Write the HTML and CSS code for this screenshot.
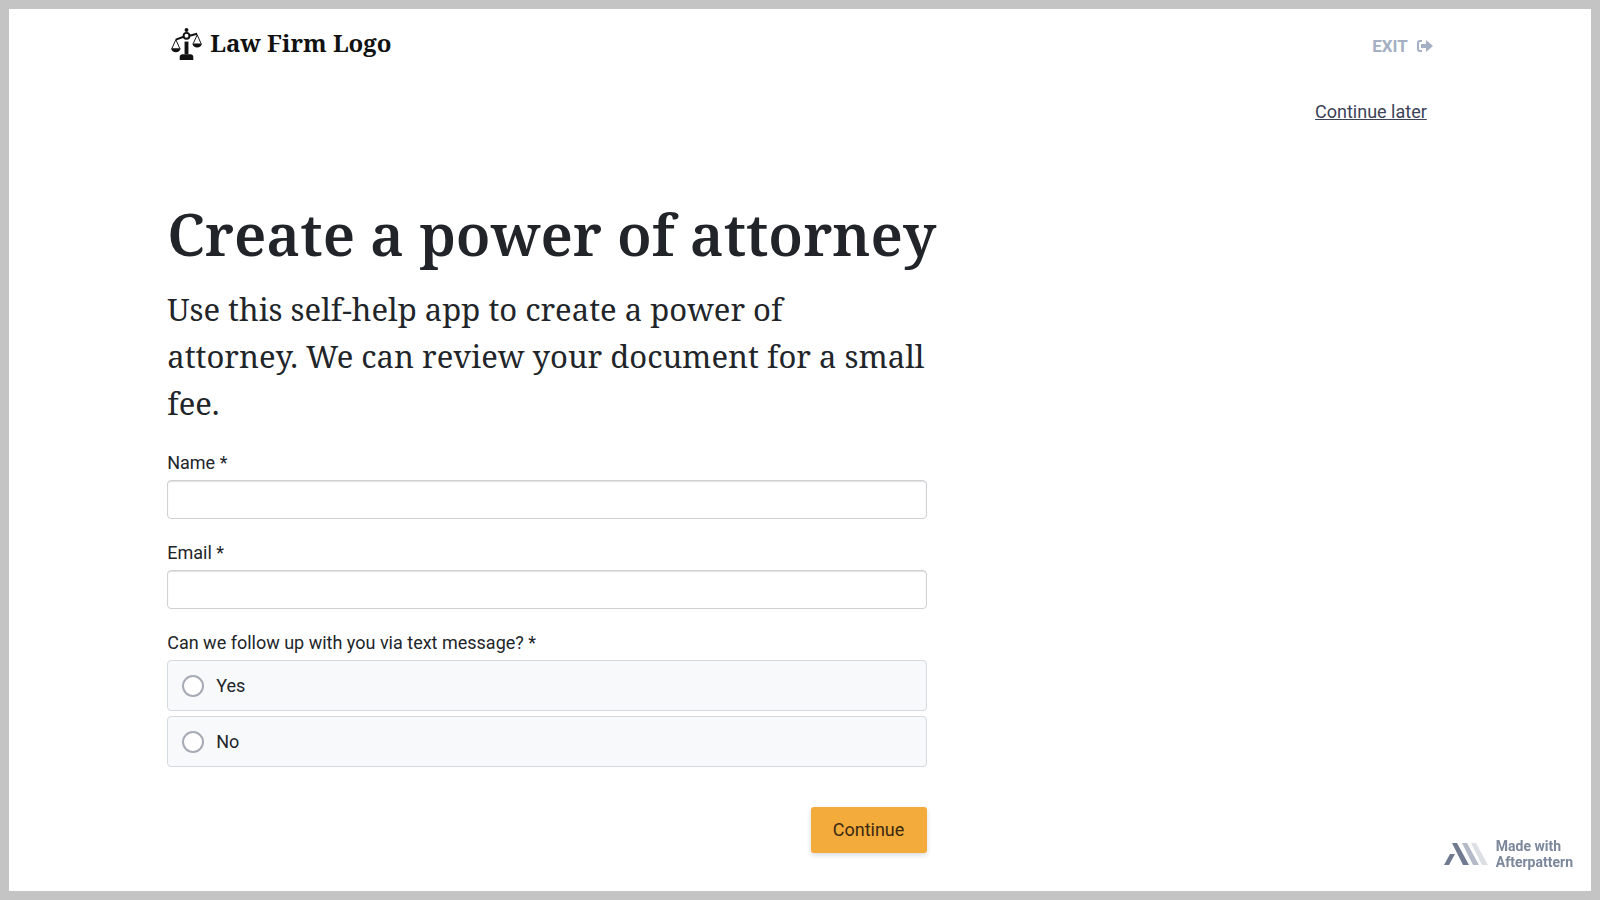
FILE: index.html
```
<!DOCTYPE html>
<html lang="en">

<head>
    <meta charset="UTF-8">
    <meta name="viewport" content="width=device-width, initial-scale=1.0">
    <title>Create a power of attorney</title>
    <link rel="stylesheet" href="styles.css">
</head>

<body>
    <div class="page">
        <div class="container">
            <header class="header">
                <div class="logo">
                    <svg class="logo-icon" viewBox="0 0 32 34" aria-hidden="true">
                        <circle cx="16" cy="3" r="2" />
                        <circle cx="16" cy="9" r="3" fill="none" stroke="#111" stroke-width="2" />
                        <path d="M5 13 L13 10 M19 9 L27 7" stroke="#111" stroke-width="2" />
                        <path d="M5 13 L1 22 M5 13 L9 22 M27 8 L23 17 M27 8 L31 17" stroke="#111" stroke-width="1" />
                        <path d="M0 22 H10 Q9 26 5 26 Q1 26 0 22 Z M22 17 H32 Q31 21 27 21 Q23 21 22 17 Z" />
                        <path d="M14 15 H18 V28 H14 Z" />
                        <path d="M9 34 V31 Q9 28 12 28 H20 Q23 28 23 31 V34 Z" />
                    </svg>
                    <span>Law Firm Logo</span>
                </div>
                <a class="exit" href="#">EXIT
                    <svg class="exit-icon" viewBox="0 0 17 14" aria-hidden="true">
                        <path d="M6 2 H4 Q2 2 2 4 V10 Q2 12 4 12 H6" fill="none" stroke="currentColor" stroke-width="2" />
                        <path d="M5 5 H10 V1 L17 7 L10 13 V9 H5 Z" fill="currentColor" />
                    </svg>
                </a>
            </header>

            <div class="later">
                <a href="#">Continue later</a>
            </div>

            <main>
                <form class="form">
                    <h1>Create a power of attorney</h1>
                    <p class="intro">Use this self-help app to create a power of<br>
                        attorney. We can review your document for a small<br>
                        fee.</p>

                    <div class="form-group">
                        <label for="name">Name *</label>
                        <input type="text" id="name" name="name" required>
                    </div>

                    <div class="form-group">
                        <label for="email">Email *</label>
                        <input type="email" id="email" name="email" required>
                    </div>

                    <fieldset class="form-group">
                        <legend>Can we follow up with you via text message? *</legend>
                        <label class="option" for="text-yes">
                            <input type="radio" id="text-yes" name="text-message" value="yes" required>
                            Yes
                        </label>
                        <label class="option" for="text-no">
                            <input type="radio" id="text-no" name="text-message" value="no">
                            No
                        </label>
                    </fieldset>

                    <button type="submit">Continue</button>
                </form>
            </main>
        </div>

        <a class="badge" href="#">
            <svg class="badge-icon" viewBox="0 0 44 22" aria-hidden="true">
                <path d="M0 22 L6 11 H11 L5 22 Z M8 0 H13 L25 22 H19 Z" fill="#707b92" />
                <path d="M18 0 H23 L35 22 H29 Z" fill="#b4bac7" />
                <path d="M27 0 H32 L44 22 H38 Z" fill="#dcdfe4" />
            </svg>
            <span>Made with<br>Afterpattern</span>
        </a>
    </div>
</body>

</html>
```
FILE: styles.css
```
* {
    box-sizing: border-box;
}

body {
    margin: 0;
    font-family: Roboto, sans-serif;
    font-size: 18px;
    line-height: 24px;
    color: #212529;
}

.page {
    min-height: 100vh;
    border: 9px solid #c4c4c4;
    background: #fff;
}

.container {
    width: 80%;
    margin: 0 auto;
    padding: 14px 0 0;
}

.header {
    display: flex;
    justify-content: space-between;
    align-items: flex-end;
    height: 38px;
}

.logo {
    display: flex;
    align-items: center;
    gap: 8px;
    padding-left: 4px;
    font-family: "Noto Serif", "Liberation Serif", serif;
    font-size: 24px;
    font-weight: bold;
    line-height: 36px;
    color: #111;
}

.logo-icon {
    width: 31px;
    height: 33px;
    fill: #111;
}

.exit {
    display: flex;
    align-items: center;
    gap: 8px;
    font-size: 17px;
    font-weight: bold;
    line-height: 30px;
    color: #a5afc3;
    text-decoration: none;
}

.exit-icon {
    width: 17px;
    height: 14px;
}

.later {
    margin-top: 39px;
    padding-right: 6px;
    text-align: right;
}

.later a {
    color: #3c4257;
}

.form {
    display: flex;
    flex-direction: column;
    width: 60%;
    margin-top: 72px;
}

h1 {
    margin: 0;
    font-family: "Noto Serif", "Liberation Serif", serif;
    font-size: 58px;
    font-weight: 600;
    line-height: 76px;
    white-space: nowrap;
}

.intro {
    margin: 14px 0 24px;
    font-family: "Noto Serif", "Liberation Serif", serif;
    font-size: 31px;
    line-height: 47px;
}

.form-group {
    margin: 0 0 22px;
    padding: 0;
    border: none;
}

label,
legend {
    display: block;
    margin-bottom: 5px;
    padding: 0;
}

input[type="text"],
input[type="email"] {
    display: block;
    width: 100%;
    height: 39px;
    padding: 0 12px;
    border: 1px solid #ced0d3;
    border-radius: 4px;
    background: #fff;
    box-shadow: inset 0 1px 1px rgba(0, 0, 0, 0.12);
    font: inherit;
}

.option {
    display: flex;
    align-items: center;
    gap: 12px;
    height: 51px;
    padding: 0 14px;
    border: 1px solid #d5d9e0;
    border-radius: 4px;
    background: #f8f9fb;
}

.option input {
    appearance: none;
    width: 22px;
    height: 22px;
    margin: 0;
    border: 2px solid #a6abb5;
    border-radius: 50%;
    background: #fff;
}

.option input:checked {
    border: 7px solid #f3ab3c;
}

button {
    align-self: flex-end;
    width: 116px;
    height: 46px;
    margin-top: 13px;
    border: none;
    border-radius: 3px;
    background: #f3ab3c;
    box-shadow: 0 2px 5px rgba(60, 66, 87, 0.2);
    color: #3b2a10;
    font: inherit;
}

.badge {
    position: fixed;
    right: 27px;
    bottom: 30px;
    display: flex;
    align-items: center;
    gap: 8px;
    font-size: 14px;
    font-weight: bold;
    line-height: 16px;
    color: #7c879c;
    text-decoration: none;
}

.badge-icon {
    width: 44px;
    height: 22px;
}
```
